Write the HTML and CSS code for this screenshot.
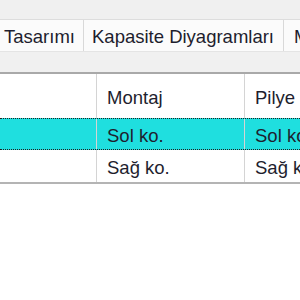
FILE: index.html
```html
<!DOCTYPE html>
<html lang="tr">
<head>
    <meta charset="UTF-8" />
    <title>Kapasite</title>
    <link rel="stylesheet" href="styles.css">
</head>
<body>

<!-- Top strip -->
<div class="topbar"></div>

<!-- Tabs -->
<div class="tabs">
    <div class="tab tab-first">Tasarımı</div>
    <div class="tab tab-second">Kapasite Diyagramları</div>
    <div class="tab tab-third">M</div>
</div>

<div class="toolbar"></div>

<!-- Grid -->
<div class="grid">
    <div class="row header">
        <div class="cell c1"></div>
        <div class="cell c2">Montaj</div>
        <div class="cell c3">Pilye</div>
    </div>
    <div class="row selected">
        <div class="cell c1"></div>
        <div class="cell c2">Sol ko.</div>
        <div class="cell c3">Sol ko.</div>
    </div>
    <div class="row">
        <div class="cell c1"></div>
        <div class="cell c2">Sağ ko.</div>
        <div class="cell c3">Sağ ko.</div>
    </div>
</div>

</body>
</html>
```

FILE: styles.css
```css
/* Basic Styles */
body {
    margin: 0;
    padding: 0;
    width: 300px;
    height: 300px;
    overflow: hidden;
    background-color: #ffffff;
    font-family: "Liberation Sans", Arial, sans-serif;
    font-size: 18.5px;
    color: #1e1e2e;
}

.topbar {
    height: 19px;
    background-color: #f0f0f0;
    border-bottom: 1px solid #dddddd;
}

/* Tabs */
.tabs {
    display: flex;
    height: 31px;
    background-color: #fbfbfb;
    border-bottom: 1px solid #e4e4e4;
    white-space: nowrap;
    overflow: hidden;
}

.tab {
    display: flex;
    align-items: center;
    padding-top: 2px;
    box-sizing: border-box;
    border-right: 1px solid #d9d9d9;
    flex-shrink: 0;
    overflow: hidden;
}

.tab-first {
    width: 84px;
    padding-left: 4px;
}

.tab-second {
    width: 200px;
    padding-left: 8px;
}

.tab-third {
    width: 16px;
    padding-left: 10px;
    border-right: none;
}

.toolbar {
    height: 20px;
    background-color: #f0f0f0;
    border-bottom: 2px solid #a9a9a9;
}

/* Grid */
.grid {
    border-bottom: 2px solid #b4b4b4;
}

.row {
    display: flex;
    height: 32px;
    white-space: nowrap;
}

.row.header {
    height: 44px;
}

.cell {
    display: flex;
    align-items: center;
    padding-left: 10px;
    padding-top: 4px;
    box-sizing: border-box;
    border-right: 1px solid #d4d4d4;
    overflow: hidden;
}

.c1 {
    width: 97px;
}

.c2 {
    width: 148px;
}

.c3 {
    flex: 1;
    border-right: none;
}

.row.selected {
    background-color: #1fdfdf;
    border-top: 1px dotted #202020;
    border-bottom: 1px dotted #202020;
    box-sizing: border-box;
}
```
